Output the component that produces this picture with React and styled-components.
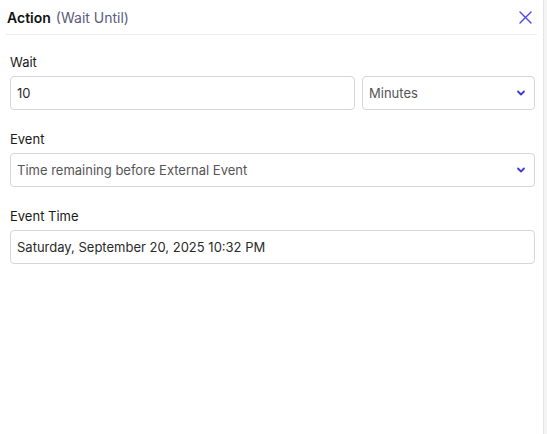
import React from "react";
import styled, { createGlobalStyle } from "styled-components";

const Global = createGlobalStyle`
  html, body { margin: 0; padding: 0; background: #f4f4f5; }
  body { font-family: Inter, "Noto Sans", sans-serif; }
  * { box-sizing: border-box; }
`;

const Page = styled.div`
  display: flex;
  height: 434px;
  width: 547px;
  overflow: hidden;
`;

const Panel = styled.div`
  width: 544px;
  height: 100%;
  background: #fff;
  border-right: 1px solid #e4e4e7;
  display: flex;
  flex-direction: column;
`;

const Header = styled.div`
  height: 35px;
  flex: 0 0 35px;
  margin: 0 6px;
  padding: 0 0 0 1px;
  display: flex;
  align-items: center;
  border-bottom: 1px solid #ececee;
  gap: 5px;
`;

const Title = styled.span`
  font-size: 14px;
  font-weight: 600;
  color: #111;
`;

const Sub = styled.span`
  font-size: 14px;
  color: #5b5b7e;
  flex: 1;
`;

const CloseBtn = styled.button`
  border: none;
  background: none;
  padding: 0;
  margin-right: 5px;
  width: 14px;
  height: 14px;
  display: flex;
  align-items: center;
  justify-content: center;
  cursor: pointer;
`;

const Body = styled.div`
  padding: 19px 8px 0 10px;
  display: flex;
  flex-direction: column;
  gap: 21px;
`;

const Field = styled.div`
  display: flex;
  flex-direction: column;
  gap: 6px;
`;

const Label = styled.div`
  font-size: 13px;
  line-height: 16px;
  color: #1a1a1a;
`;

const Row = styled.div`
  display: flex;
  gap: 7px;
`;

const Box = styled.div`
  height: 34px;
  flex-shrink: 0;
  border: 1px solid #d6d6da;
  border-radius: 4px;
  padding: 0 8px 0 6px;
  display: flex;
  align-items: center;
  font-size: 13px;
  color: ${(p) => (p.$muted ? "#555" : "#2a2a2a")};
  ${(p) => (p.$w ? `flex: 0 0 ${p.$w}px;` : p.$grow ? "flex: 1 1 auto;" : "")}
  justify-content: space-between;
  background: #fff;
`;

const Chevron = () => (
  <svg width="10" height="10" viewBox="0 0 10 10">
    <path d="M2 3.5 L5 6.5 L8 3.5" fill="none" stroke="#3a3ad6" strokeWidth="1.8" strokeLinecap="round" strokeLinejoin="round" />
  </svg>
);

export default function App() {
  return (
    <>
      <Global />
      <Page>
        <Panel>
          <Header>
            <Title>Action</Title>
            <Sub>(Wait Until)</Sub>
            <CloseBtn aria-label="close">
              <svg width="13" height="13" viewBox="0 0 13 13">
                <path d="M1 1 L12 12 M12 1 L1 12" stroke="#4848e6" strokeWidth="1.4" strokeLinecap="round" />
              </svg>
            </CloseBtn>
          </Header>
          <Body>
            <Field>
              <Label>Wait</Label>
              <Row>
                <Box $grow>10</Box>
                <Box $w={173} $muted>
                  Minutes
                  <Chevron />
                </Box>
              </Row>
            </Field>
            <Field>
              <Label>Event</Label>
              <Box $muted>
                Time remaining before External Event
                <Chevron />
              </Box>
            </Field>
            <Field>
              <Label>Event Time</Label>
              <Box>Saturday, September 20, 2025 10:32 PM</Box>
            </Field>
          </Body>
        </Panel>
      </Page>
    </>
  );
}
